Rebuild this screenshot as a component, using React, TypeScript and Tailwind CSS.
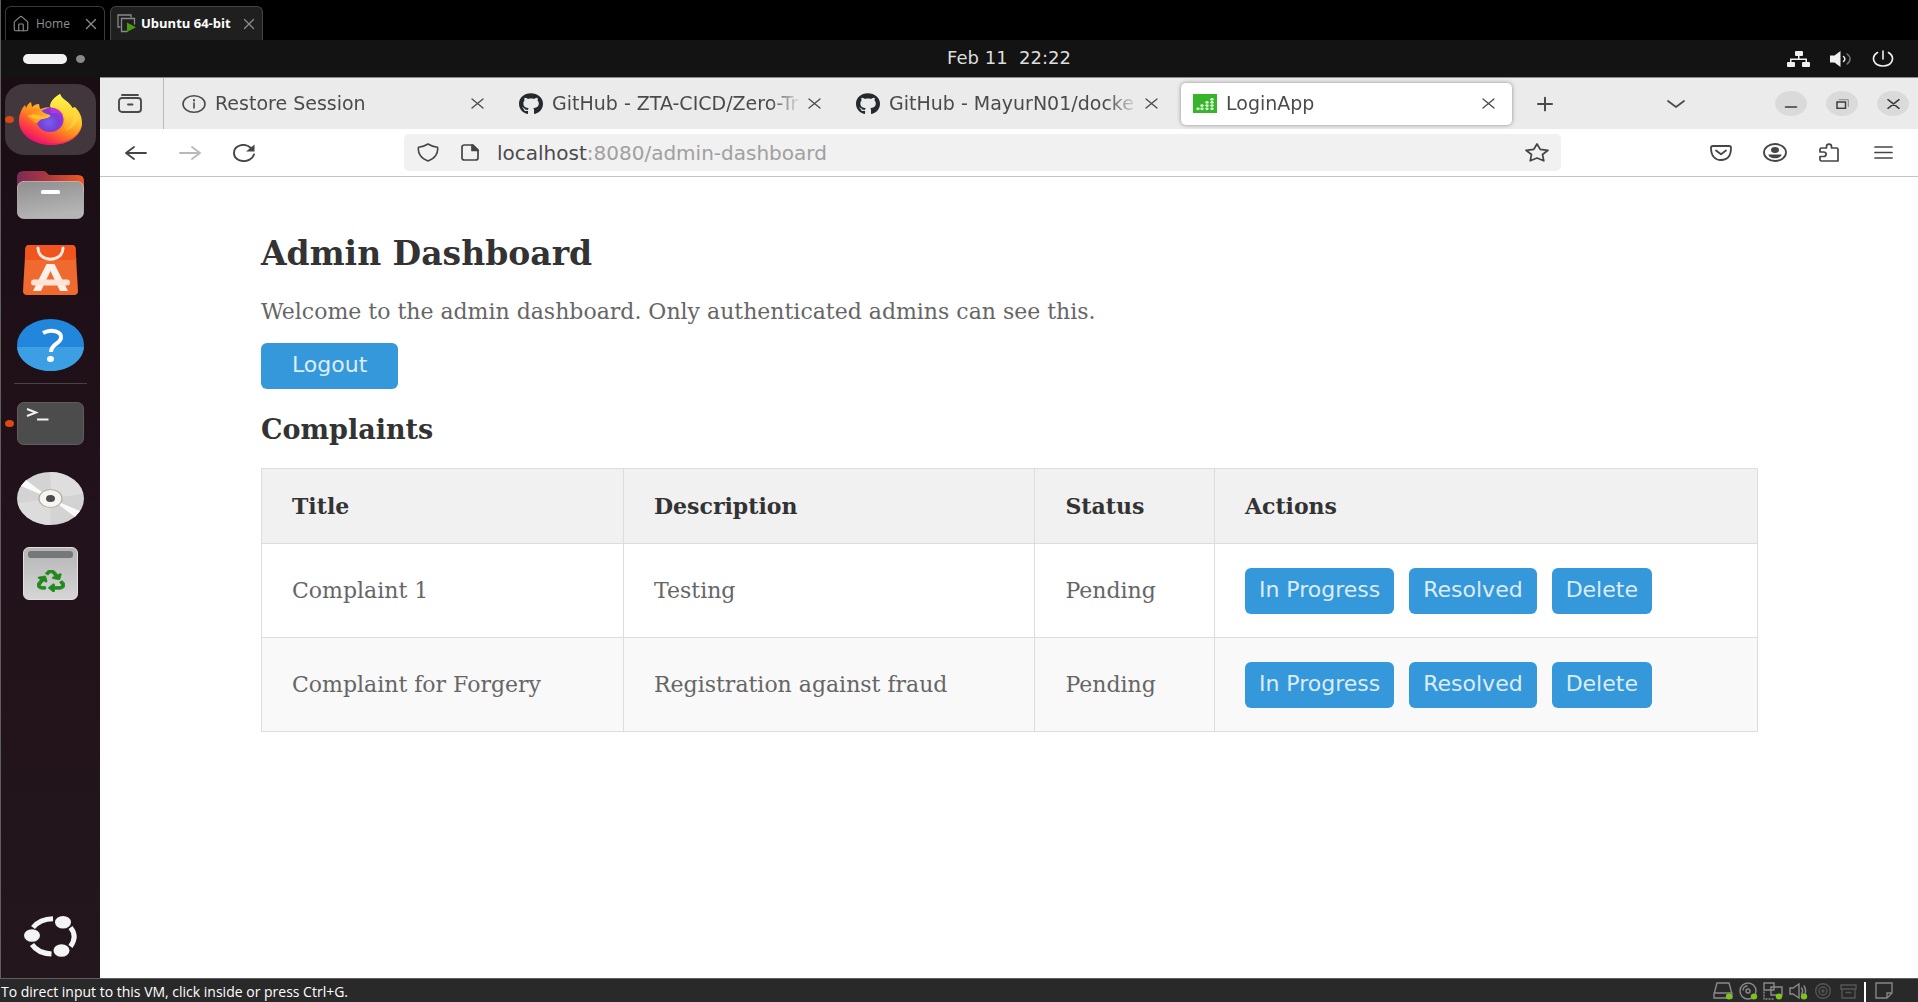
import type { ReactNode, SVGProps } from "react";
import { House, Plus, X, Minus } from "lucide-react";
import { FaGithub, FaRecycle } from "react-icons/fa";

const SANS = "font-['DejaVu_Sans',sans-serif]";
const SERIF = "font-['DejaVu_Serif',serif]";
const UI = "font-['Open_Sans',sans-serif]";

function Glyph(props: SVGProps<SVGSVGElement>) {
  return (
    <svg
      fill="none"
      stroke="currentColor"
      strokeLinecap="round"
      strokeLinejoin="round"
      preserveAspectRatio="none"
      aria-hidden="true"
      {...props}
    />
  );
}

/* ---------- virtual machine tabs ---------- */

function MachineTabs() {
  return (
    <div className={`flex h-10 items-end gap-[5px] bg-black pl-1 ${UI}`}>
      <div className="flex h-[34px] w-[100px] items-center rounded-t-md border border-b-0 border-[#3a3a3a] pl-[6px] text-[12px] text-[#8f8f8f]">
        <House className="size-[18px]" strokeWidth={1.5} />
        <span className="ml-[6px]">Home</span>
        <button type="button" aria-label="Close Home" className="ml-auto mr-1">
          <X className="size-[18px] text-[#8a8a8a]" strokeWidth={1.8} />
        </button>
      </div>
      <div className="flex h-[34px] w-[153px] items-center rounded-t-md border border-b-0 border-[#444] bg-[#1f1f1f] pl-[6px] text-[13px] text-white">
        <Glyph viewBox="0 0 19 19" className="size-[19px] shrink-0 text-[#8a8a8a]" strokeWidth="1.3" strokeLinejoin="miter">
          <path d="M3 13H1V1h13v2" />
          <path d="M10 17.500H4.500V4.500h13V10" />
          <path d="M10 8.500v9.500l9-4.700z" fill="#4a9a10" stroke="none" />
        </Glyph>
        <span className="ml-[5px] whitespace-nowrap font-bold">Ubuntu 64-bit</span>
        <button type="button" aria-label="Close Ubuntu 64-bit" className="ml-auto mr-1">
          <X className="size-[18px] text-[#8a8a8a]" strokeWidth={1.8} />
        </button>
      </div>
    </div>
  );
}

/* ---------- desktop top bar ---------- */

function TopBar() {
  return (
    <div className={`flex h-[37px] items-center bg-[#131313] pl-[22px] pr-6 ${SANS}`}>
      <div className="flex flex-1 items-center gap-[9px]">
        <span className="h-[10px] w-11 rounded-full bg-[#f2f2f2]" />
        <span className="h-2 w-[9px] rounded-[50%] bg-[#8a8a8a]" />
      </div>
      {/* the clock is centred on the part of the bar right of the dock */}
      <time className="ml-[101px] whitespace-pre pb-[2px] text-[18px] leading-6 text-[#dedede]">Feb 11&nbsp; 22:22</time>
      <div className="flex flex-1 items-center justify-end gap-5 text-[#f0f0f0]">
        <Glyph viewBox="0 0 23 16" className="h-4 w-[23px]" fill="currentColor" stroke="none">
          <rect x="8" y="0" width="8" height="5" rx="1" />
          <rect x="0" y="11" width="8" height="5" rx="1" />
          <rect x="15" y="11" width="8" height="5" rx="1" />
          <path d="M11 5h1.500v2.500H20V11h-1.500V9H4.500v2H3V7.500h8z" />
        </Glyph>
        <Glyph viewBox="0 0 22 16" className="h-4 w-[22px]" strokeWidth="1.500">
          <path d="M0 4.500h4.500L10.500 0v16l-6-4.500H0z" fill="currentColor" stroke="none" />
          <path d="M13.500 5.500c1.800 1.500 1.800 3.500 0 5" />
          <path d="M17 3c4 2.800 4 7.200 0 10" stroke="#777" />
        </Glyph>
        <Glyph viewBox="0 0 22 17" className="h-[17px] w-[22px]" strokeWidth="1.600">
          <path d="M11 1v8" />
          <path d="M5.500 2.500C-2 7.500 2 16 11 16s13-8.500 5.500-13.500" />
        </Glyph>
      </div>
    </div>
  );
}

/* ---------- dock ---------- */

function DockItem({ label, running, active, children }: { label: string; running?: boolean; active?: boolean; children: ReactNode }) {
  return (
    <button type="button" aria-label={label} className="relative flex h-[75px] w-full items-center justify-center">
      {active && <span className="absolute inset-x-1 inset-y-[2px] rounded-[20px_20px_20px_20px/18px_18px_18px_18px] bg-[#42373d]" />}
      {running && <span className="absolute left-1 top-[34px] h-[7px] w-[9px] rounded-[50%] bg-[#db4a16]" />}
      <span className="relative">{children}</span>
    </button>
  );
}

function FirefoxIcon() {
  return (
    <Glyph viewBox="0 0 63 52" className="h-[52px] w-[63px]" stroke="none">
      <defs>
        <linearGradient id="ffBody" x1="0.850" y1="0.100" x2="0.250" y2="1">
          <stop offset="0" stopColor="#fff04a" />
          <stop offset="0.300" stopColor="#ffc52e" />
          <stop offset="0.550" stopColor="#ff8a1e" />
          <stop offset="0.780" stopColor="#ff3b45" />
          <stop offset="1" stopColor="#e3067a" />
        </linearGradient>
        <radialGradient id="ffGlobe" cx="0.450" cy="0.600" r="0.650">
          <stop offset="0" stopColor="#7a5cf5" />
          <stop offset="0.550" stopColor="#7440d4" />
          <stop offset="1" stopColor="#a72be0" />
        </radialGradient>
        <linearGradient id="ffTail" x1="0.500" y1="0" x2="0.500" y2="1">
          <stop offset="0" stopColor="#fff44f" />
          <stop offset="0.600" stopColor="#ffd233" />
          <stop offset="1" stopColor="#ff9a22" />
        </linearGradient>
        <linearGradient id="ffFace" x1="0" y1="0" x2="1" y2="0.300">
          <stop offset="0" stopColor="#ff7a1a" />
          <stop offset="1" stopColor="#ffb527" />
        </linearGradient>
      </defs>
      <path d="M0 27C0 20 3 14 6 11l1 3c1-3 3-5 5-6l1 5c2-2 4-3 7-3l1 5c4-1 7-2 11-1C31 7 36 3 41 0c2 6 11 8 12 14l3-1c5 5 7 10 7 16 0 13-14 22-31 22S0 41 0 27z" fill="url(#ffBody)" />
      <path d="M20 47c20 6 38-2 42-14-1 11-14 18-30 18-5 0-8-2-12-4z" fill="#e3067a" opacity="0.350" />
      <path d="M31 13C31 7 36 3 41 0c2 7 13 9 14 19 1 9-5 15-12 18 4-5 5-12 1-18-3-4-8-6-13-6z" fill="url(#ffTail)" />
      <ellipse cx="31" cy="26" rx="13.500" ry="12" fill="url(#ffGlobe)" />
      <path d="M31 13.500c6 0 11 3 13 8-4-3-9-3-12-2z" fill="#b833e1" />
      <path d="M8 22c0-4 5-8 13-7 2 3 5 5 10 6 1 3-4 3-8 4-3 1-3 3-5 4-4-1-7-4-10-7z" fill="url(#ffFace)" />
      <path d="M9 22c4-2 9-2 12 0 3 1 6 0 10-1-1 3-5 3-9 4-5 1-9-1-13-3z" fill="#ffbd2e" />
      <path d="M54 16c2 8-2 17-9 21 9-2 14-8 14-15z" fill="#ffe04a" opacity="0.500" />
    </Glyph>
  );
}

function FilesIcon() {
  return (
    <Glyph viewBox="0 0 67 48" className="h-12 w-[67px]" stroke="none">
      <defs>
        <linearGradient id="flBack" x1="0" y1="0" x2="1" y2="0">
          <stop offset="0" stopColor="#7d2a56" />
          <stop offset="0.500" stopColor="#b03a3c" />
          <stop offset="1" stopColor="#ee5a24" />
        </linearGradient>
        <linearGradient id="flFront" x1="0" y1="0" x2="0.300" y2="1">
          <stop offset="0" stopColor="#8e8e8e" />
          <stop offset="1" stopColor="#b5b5b5" />
        </linearGradient>
      </defs>
      <path d="M0 20V6q0-6 7-6h19q2 0 3 1l3 3h29q6 0 6 6v12z" fill="url(#flBack)" />
      <rect x="0.500" y="10.500" width="66" height="37" rx="6" fill="url(#flFront)" stroke="#c9c9c9" strokeWidth="0.700" />
      <rect x="24" y="19" width="19" height="4" rx="1.500" fill="#fff" />
    </Glyph>
  );
}

function SoftwareIcon() {
  return (
    <Glyph viewBox="0 0 55 50" className="h-[50px] w-[55px]">
      <path d="M6 0h43q3 0 3.500 3L55 46q0 4-4 4H4q-4 0-4-4L2.500 3Q3 0 6 0z" fill="#f0692f" stroke="none" />
      <path d="M6 0h43q3 0 3.500 3L53.300 15H1.800L2.500 3Q3 0 6 0z" fill="#f0541f" stroke="none" />
      <path d="M15 3c0 15 25 15 25 0" stroke="#fde9e0" strokeWidth="3" />
      <path d="M23.500 19h8L45 46h-8L27.500 26 18 46h-8z" fill="#fff1ea" stroke="none" />
      <path d="M11 37.500h33" stroke="#ffe3d8" strokeWidth="6" />
    </Glyph>
  );
}

function HelpIcon() {
  return (
    <Glyph viewBox="0 0 67 52" className="h-[52px] w-[67px]">
      <ellipse cx="33.500" cy="26" rx="33.500" ry="26" fill="#2286dc" stroke="none" />
      <path d="M0 28h67C66 42 51 52 33.500 52S1 42 0 28z" fill="#3d9fe3" stroke="none" />
      <path d="M26 14c9-5 19-1 18 5-1 6-10 6-10 14" stroke="#fff" strokeWidth="4" strokeLinecap="butt" />
      <ellipse cx="33.500" cy="40" rx="3.500" ry="3" fill="#fff" stroke="none" />
    </Glyph>
  );
}

function TerminalIcon() {
  return (
    <Glyph viewBox="0 0 67 43" className="h-[43px] w-[67px]">
      <rect x="0.500" y="0.500" width="66" height="42" rx="6" fill="#4c4c4c" stroke="#5e5e5e" />
      <path d="M10 7l9 3.500-9 3.500" stroke="#f2f2f2" strokeWidth="2" strokeLinecap="butt" strokeLinejoin="miter" />
      <path d="M20 17.500h11.500" stroke="#f2f2f2" strokeWidth="2" strokeLinecap="butt" />
    </Glyph>
  );
}

function DiscIcon() {
  return (
    <Glyph viewBox="0 0 67 53" className="h-[53px] w-[67px]" stroke="none">
      <ellipse cx="33.500" cy="26.500" rx="33.500" ry="26.500" fill="#d3d3d3" />
      <path d="M33.500 26.500V0C50 0 64 11 66 22z" fill="#dedede" />
      <path d="M33.500 26.500V53C17 53 3 42 1 31z" fill="#dcdcdc" />
      <path d="M33.500 26.500L4 14l5-6z" fill="#fafafa" />
      <path d="M33.500 26.500L63 39l-5 6z" fill="#fafafa" />
      <ellipse cx="33.500" cy="26.500" rx="11.500" ry="9" fill="#f7f5f2" stroke="#b5ad9d" strokeWidth="1.200" />
      <ellipse cx="33.500" cy="26.500" rx="4.500" ry="3.600" fill="#4c4c4c" />
    </Glyph>
  );
}

function TrashIcon() {
  return (
    <span className="flex h-[53px] w-[55px] flex-col items-center rounded-md border border-[#e0e0e0] bg-linear-to-b from-[#b5b5b5] to-[#d6d6d6] pt-[3px]">
      <span className="h-[7px] w-[45px] rounded-[3px] bg-[#777]" />
      <FaRecycle className="mt-[12px] h-[22px] w-7 text-[#23891f]" stroke="#23891f" strokeWidth={16} preserveAspectRatio="none" />
    </span>
  );
}

function UbuntuIcon() {
  return (
    <Glyph viewBox="0 0 53 41" className="h-[41px] w-[53px] text-[#f4f4f4]" strokeWidth="5" strokeLinecap="butt">
      <path d="M9 11.500C14 5.500 20 3 29 2.800" />
      <path d="M46.500 11.500c5 6 5 12 0 19" />
      <path d="M8 28.500C12 34.500 18 37.500 27.500 38" />
      <g fill="currentColor" stroke="none">
        <ellipse cx="8" cy="19.500" rx="8" ry="6.300" />
        <ellipse cx="39" cy="6.300" rx="8" ry="6.300" />
        <ellipse cx="37.500" cy="34.500" rx="8" ry="6.300" />
      </g>
    </Glyph>
  );
}

function Dock() {
  return (
    <nav aria-label="Dock" className="flex w-[99px] shrink-0 flex-col bg-linear-to-b from-[#1a0d14] via-[#22121b] to-[#23161c] pt-[5px]">
      <DockItem label="Firefox" running active><FirefoxIcon /></DockItem>
      <DockItem label="Files"><FilesIcon /></DockItem>
      <DockItem label="App Center"><SoftwareIcon /></DockItem>
      <DockItem label="Help"><HelpIcon /></DockItem>
      <span className="mx-auto mb-[2px] mt-px h-px w-[73px] bg-[#4a4145]" />
      <DockItem label="Terminal" running><TerminalIcon /></DockItem>
      <DockItem label="Disc"><DiscIcon /></DockItem>
      <DockItem label="Trash"><TrashIcon /></DockItem>
      <div className="mb-1 mt-auto">
        <DockItem label="Show applications"><UbuntuIcon /></DockItem>
      </div>
    </nav>
  );
}

/* ---------- browser ---------- */

function Tab({ icon, title, active }: { icon: ReactNode; title: string; active?: boolean }) {
  return (
    <div className="w-[337px] min-w-0 px-[3px]">
      <div className={active ? "flex h-[42px] items-center rounded-[5px] bg-white px-3 shadow-[0_0_4px_rgba(0,0,0,0.4)]" : "flex h-[42px] items-center px-3"}>
        <span className="flex w-[24px] shrink-0 justify-center">{icon}</span>
        <span className="ml-[9px] min-w-0 flex-1 overflow-hidden whitespace-nowrap pb-[2px] text-[19px] leading-7 text-[#4b4b4b] [mask-image:linear-gradient(to_right,black_calc(100%-32px),transparent)]">{title}</span>
        <button type="button" aria-label={`Close ${title}`} className="flex w-6 shrink-0 justify-center">
          <Glyph viewBox="0 0 13 11" className="h-[11px] w-[13px] text-[#4b4b4b]" strokeWidth="1.300"><path d="M1 1l11 9M12 1L1 10" /></Glyph>
        </button>
      </div>
    </div>
  );
}

/* centres of the dots in the favicon: columns of growing height */
const dots = [[5, 14], [9, 14], [9, 11], [14, 14], [14, 11], [14, 8], [19, 14], [19, 11], [19, 8], [19, 5]];

function WindowButton({ label, children }: { label: string; children: ReactNode }) {
  return (
    <button type="button" aria-label={label} className="flex h-[25px] w-8 items-center justify-center rounded-[50%] bg-[#dadada] text-[#3d3d3d]">
      {children}
    </button>
  );
}

function TabStrip() {
  return (
    <div className="flex h-[52px] items-center border-t border-[#8a8a8a] bg-[#ebebeb] text-[#4a4a4a]">
      <button type="button" aria-label="Recent browsing" className="flex h-full w-[64px] shrink-0 items-center justify-center border-r border-[#b8b8b8] pr-1">
        <Glyph viewBox="0 0 24 19" className="h-[19px] w-6" strokeWidth="1.900">
          <path d="M4 1h16" />
          <rect x="1" y="4" width="22" height="14" rx="3" />
          <path d="M10 10.500h4.500" />
        </Glyph>
      </button>
      <div className="flex min-w-0 pl-[3px]">
        <Tab
          title="Restore Session"
          icon={
            <Glyph viewBox="0 0 24 18" className="h-[18px] w-[24px]" strokeWidth="1.600">
              <ellipse cx="12" cy="9" rx="11" ry="8.200" />
              <path d="M12 8v5" />
              <path d="M12 5v0.500" strokeWidth="2" />
            </Glyph>
          }
        />
        <Tab title="GitHub - ZTA-CICD/Zero-Tr" icon={<FaGithub className="h-[22px] w-6 text-[#24292f]" preserveAspectRatio="none" />} />
        <Tab title="GitHub - MayurN01/docke" icon={<FaGithub className="h-[22px] w-6 text-[#24292f]" preserveAspectRatio="none" />} />
        <Tab
          title="LoginApp"
          active
          icon={
            <Glyph viewBox="0 0 24 18" className="h-[19px] w-6" stroke="none">
              <rect width="24" height="18" fill="#36b52b" />
              {dots.map(([x, y]) => (
                <ellipse key={`${x}-${y}`} cx={x} cy={y} rx="1.700" ry="1.300" fill="#dff5dc" />
              ))}
            </Glyph>
          }
        />
      </div>
      <button type="button" aria-label="New tab" className="ml-[18px] flex w-6 shrink-0 justify-center">
        <Plus className="h-[22px] w-7" strokeWidth={2} preserveAspectRatio="none" />
      </button>
      <div className="ml-auto flex shrink-0 items-center pr-[9px]">
        <button type="button" aria-label="List all tabs" className="mr-[90px]">
          <Glyph viewBox="0 0 18 8" className="h-2 w-[18px]" strokeWidth="1.700"><path d="M1 1l8 6 8-6" /></Glyph>
        </button>
        <div className="flex gap-[19px]">
          <WindowButton label="Minimize">
            <Minus className="mt-[6px] h-3 w-[18px]" strokeWidth={3} preserveAspectRatio="none" />
          </WindowButton>
          <WindowButton label="Restore">
            <Glyph viewBox="0 0 13 10" className="h-[10px] w-[13px]" strokeWidth="1.500" strokeLinejoin="miter">
              <rect x="1" y="3" width="8.500" height="6.300" />
              <path d="M3 0.700h9.300V7.500" stroke="#888" strokeWidth="1" />
            </Glyph>
          </WindowButton>
          <WindowButton label="Close window">
            <Glyph viewBox="0 0 13 10" className="h-[10px] w-[13px]" strokeWidth="1.600"><path d="M1 0.700l11 8.600M12 0.700L1 9.300" /></Glyph>
          </WindowButton>
        </div>
      </div>
    </div>
  );
}

function ToolButton({ label, children }: { label: string; children: ReactNode }) {
  return (
    <button type="button" aria-label={label} className="flex h-8 w-[54px] shrink-0 items-center justify-center">
      {children}
    </button>
  );
}

function Toolbar() {
  return (
    <div className="flex h-[48px] items-center border-b border-[#c4c4c4] bg-white text-[#454545]">
      <div className="flex w-[304px] shrink-0 pl-[9px]">
        <ToolButton label="Back">
          <Glyph viewBox="0 0 22 14" className="h-[14px] w-[22px]" strokeWidth="1.800"><path d="M21 7H1M9 1L1 7l8 6" /></Glyph>
        </ToolButton>
        <ToolButton label="Forward">
          <Glyph viewBox="0 0 22 14" className="h-[14px] w-[22px] text-[#b9b9b9]" strokeWidth="1.800"><path d="M1 7h20M13 1l8 6-8 6" /></Glyph>
        </ToolButton>
        <ToolButton label="Reload">
          <Glyph viewBox="0 0 22 18" className="h-[18px] w-[22px]" strokeWidth="1.900">
            <path d="M18.500 4.500C12-2 1 1 1 9c0 10 17 11 20 1.500" />
            <path d="M21.500 0.500v7H13z" fill="currentColor" stroke="none" />
          </Glyph>
        </ToolButton>
      </div>
      <div className="flex h-[37px] min-w-0 flex-1 items-center rounded-[5px] bg-[#f1f1f1] pl-[13px] pr-3">
        <Glyph viewBox="0 0 22 19" className="h-[19px] w-[22px] shrink-0" strokeWidth="1.600">
          <path d="M11 1C8 3 5 3.800 1.500 4.200 0.500 10 4 15.500 11 18c7-2.500 10.500-8 9.500-13.800C17 3.800 14 3 11 1z" />
        </Glyph>
        <Glyph viewBox="0 0 18 17" className="ml-[22px] h-[17px] w-[18px] shrink-0" strokeWidth="1.700">
          <path d="M3.500 1H12l5 5v8q0 2-2.500 2h-11Q1 16 1 14V3q0-2 2.500-2z" />
          <path d="M11 1v5.500h6z" fill="currentColor" />
        </Glyph>
        <a href="#address" className="ml-[18px] min-w-0 flex-1 truncate text-[20px] leading-7 text-[#a0a0a0]">
          <span className="text-[#4b4b4b]">localhost</span>:8080/admin-dashboard
        </a>
        <button type="button" aria-label="Bookmark this page" className="shrink-0">
          <Glyph viewBox="0 0 24 19" className="h-[19px] w-6" strokeWidth="1.700">
            <path d="M12 1l3.200 5.300 7.800 1-5.500 4.200 1.300 6.300L12 15l-6.800 2.800 1.300-6.300L1 7.300l7.800-1z" />
          </Glyph>
        </button>
      </div>
      <div className="flex shrink-0 pl-[133px] pr-2">
        <ToolButton label="Save to Pocket">
          <Glyph viewBox="0 0 22 16" className="h-4 w-[22px]" strokeWidth="1.800">
            <path d="M3 1h16q2 0 2 1.800C21 11 17 15 11 15S1 11 1 2.800Q1 1 3 1z" />
            <path d="M6 5.500l5 3.800 5-3.800" />
          </Glyph>
        </ToolButton>
        <ToolButton label="Account">
          <Glyph viewBox="0 0 24 19" className="h-[19px] w-6" strokeWidth="1.800">
            <ellipse cx="12" cy="9.500" rx="11" ry="8.500" />
            <ellipse cx="12" cy="7" rx="4" ry="3" fill="currentColor" stroke="none" />
            <path d="M5.500 11.500h13c0 5-13 5-13 0z" fill="currentColor" stroke="none" />
          </Glyph>
        </ToolButton>
        <ToolButton label="Extensions">
          <Glyph viewBox="0 0 20 19" className="h-[19px] w-5" strokeWidth="1.700">
            <path d="M7.500 5V3.500c0-3.300 5-3.300 5 0V5H17.500q1.500 0 1.500 1.300V18H2.500Q1 18 1 16.700V13.500h3.500c3.500 0 3.500-4.500 0-4.500H1V6.300Q1 5 2.500 5z" />
          </Glyph>
        </ToolButton>
        <ToolButton label="Open menu">
          <Glyph viewBox="0 0 19 13" className="h-[13px] w-[19px]" strokeWidth="1.700"><path d="M1 1h17M1 6.500h17M1 12h17" /></Glyph>
        </ToolButton>
      </div>
    </div>
  );
}

/* ---------- page ---------- */

const complaints = [
  { title: "Complaint 1", description: "Testing", status: "Pending" },
  { title: "Complaint for Forgery", description: "Registration against fraud", status: "Pending" },
];

function ActionButton({ wide, children }: { wide?: boolean; children: ReactNode }) {
  return (
    <button
      type="button"
      className={`h-[46px] rounded-[6px] bg-[#3598db] pb-[2px] text-[22px] leading-7 text-[#dcedf9] ${SANS} ${wide ? "px-[31px]" : "px-[14px]"}`}
    >
      {children}
    </button>
  );
}

function Dashboard() {
  return (
    <main className={`flex-1 bg-white pl-[161px] pr-40 pt-[56px] text-[#666] ${SERIF}`}>
      <h1 className="text-[33px] font-bold leading-[42px] text-[#333]">Admin Dashboard</h1>
      <p className="mb-[16px] mt-[22px] text-[22px] leading-[30px]">Welcome to the admin dashboard. Only authenticated admins can see this.</p>
      <ActionButton wide>Logout</ActionButton>
      <h2 className="mb-[21px] mt-[24px] text-[27px] font-bold leading-[34px] text-[#333]">Complaints</h2>
      <table className="w-full table-fixed border-collapse text-left text-[22px] leading-7">
        <thead>
          <tr className="h-[75px] bg-[#f1f1f1] text-[#333]">
            <th className="w-[24.2%] border border-[#ddd] px-[30px]">Title</th>
            <th className="w-[27.5%] border border-[#ddd] px-[30px]">Description</th>
            <th className="w-[12%] border border-[#ddd] px-[30px]">Status</th>
            <th className="border border-[#ddd] px-[30px]">Actions</th>
          </tr>
        </thead>
        <tbody>
          {complaints.map((c) => (
            <tr key={c.title} className="h-[94px] even:bg-[#f9f9f9]">
              <td className="border border-[#ddd] px-[30px]">{c.title}</td>
              <td className="border border-[#ddd] px-[30px]">{c.description}</td>
              <td className="border border-[#ddd] px-[30px]">{c.status}</td>
              <td className="border border-[#ddd] px-[30px]">
                <div className="flex gap-[15px]">
                  <ActionButton>In Progress</ActionButton>
                  <ActionButton>Resolved</ActionButton>
                  <ActionButton>Delete</ActionButton>
                </div>
              </td>
            </tr>
          ))}
        </tbody>
      </table>
    </main>
  );
}

/* ---------- status bar ---------- */

function StatusGlyph({ on, children }: { on?: boolean; children: ReactNode }) {
  return (
    <Glyph viewBox="0 0 20 18" className={on ? "h-[18px] w-5 text-[#8a8a8a]" : "h-[18px] w-5 text-[#555]"} strokeWidth="1.400" strokeLinejoin="miter">
      {children}
      {on && <ellipse cx="16" cy="14.500" rx="3.200" ry="3" fill="#7cc41a" stroke="none" />}
    </Glyph>
  );
}

function StatusBar() {
  return (
    <footer className={`flex h-6 items-center border-t border-[#5e5e5e] bg-[#292929] text-[14px] leading-5 text-white ${UI}`}>
      <span className="truncate pl-px pt-[3px]">To direct input to this VM, click inside or press Ctrl+G.</span>
      <div className="ml-auto flex h-full shrink-0 items-center gap-[5px] pr-6 pt-px">
        <StatusGlyph on><path d="M4 1h12l3 11v4H1v-4zM1 11h18" /></StatusGlyph>
        <StatusGlyph on>
          <circle cx="10" cy="9" r="8" />
          <circle cx="10" cy="9" r="2" />
          <path d="M5 8c0-2 2-4 4-4" />
        </StatusGlyph>
        <StatusGlyph on>
          <path d="M1 1h10v7H1zM8 5h11v8H8z" />
          <path d="M1 10v7h10" strokeDasharray="1 2" />
        </StatusGlyph>
        <StatusGlyph on>
          <path d="M2 6h3l6-4v14l-6-4H2zM13.500 6c1.500 2 1.500 4 0 6M16 4c2 3 2 5 1 8" />
        </StatusGlyph>
        <StatusGlyph>
          <circle cx="10" cy="9" r="7.300" />
          <circle cx="10" cy="9" r="4" />
          <circle cx="10" cy="9" r="1" />
        </StatusGlyph>
        <StatusGlyph><path d="M3 3h15v4H3zM4 7v9h13V7M8 10.500h5" /></StatusGlyph>
        <span className="ml-px mr-[3px] h-5 w-[2px] self-end bg-white" />
        <StatusGlyph><path d="M2 1h16v10l-5 5H2zM18 11h-5v5" stroke="#858585" /></StatusGlyph>
      </div>
    </footer>
  );
}

export default function App() {
  return (
    <div className="flex min-h-screen flex-col bg-black">
      <div className="flex flex-1 flex-col border-l border-[#5e5e5e]">
        <MachineTabs />
        <TopBar />
        <div className="flex flex-1">
          <Dock />
          <div className={`flex min-w-0 flex-1 flex-col ${SANS}`}>
            <TabStrip />
            <Toolbar />
            <Dashboard />
          </div>
        </div>
      </div>
      <StatusBar />
    </div>
  );
}
